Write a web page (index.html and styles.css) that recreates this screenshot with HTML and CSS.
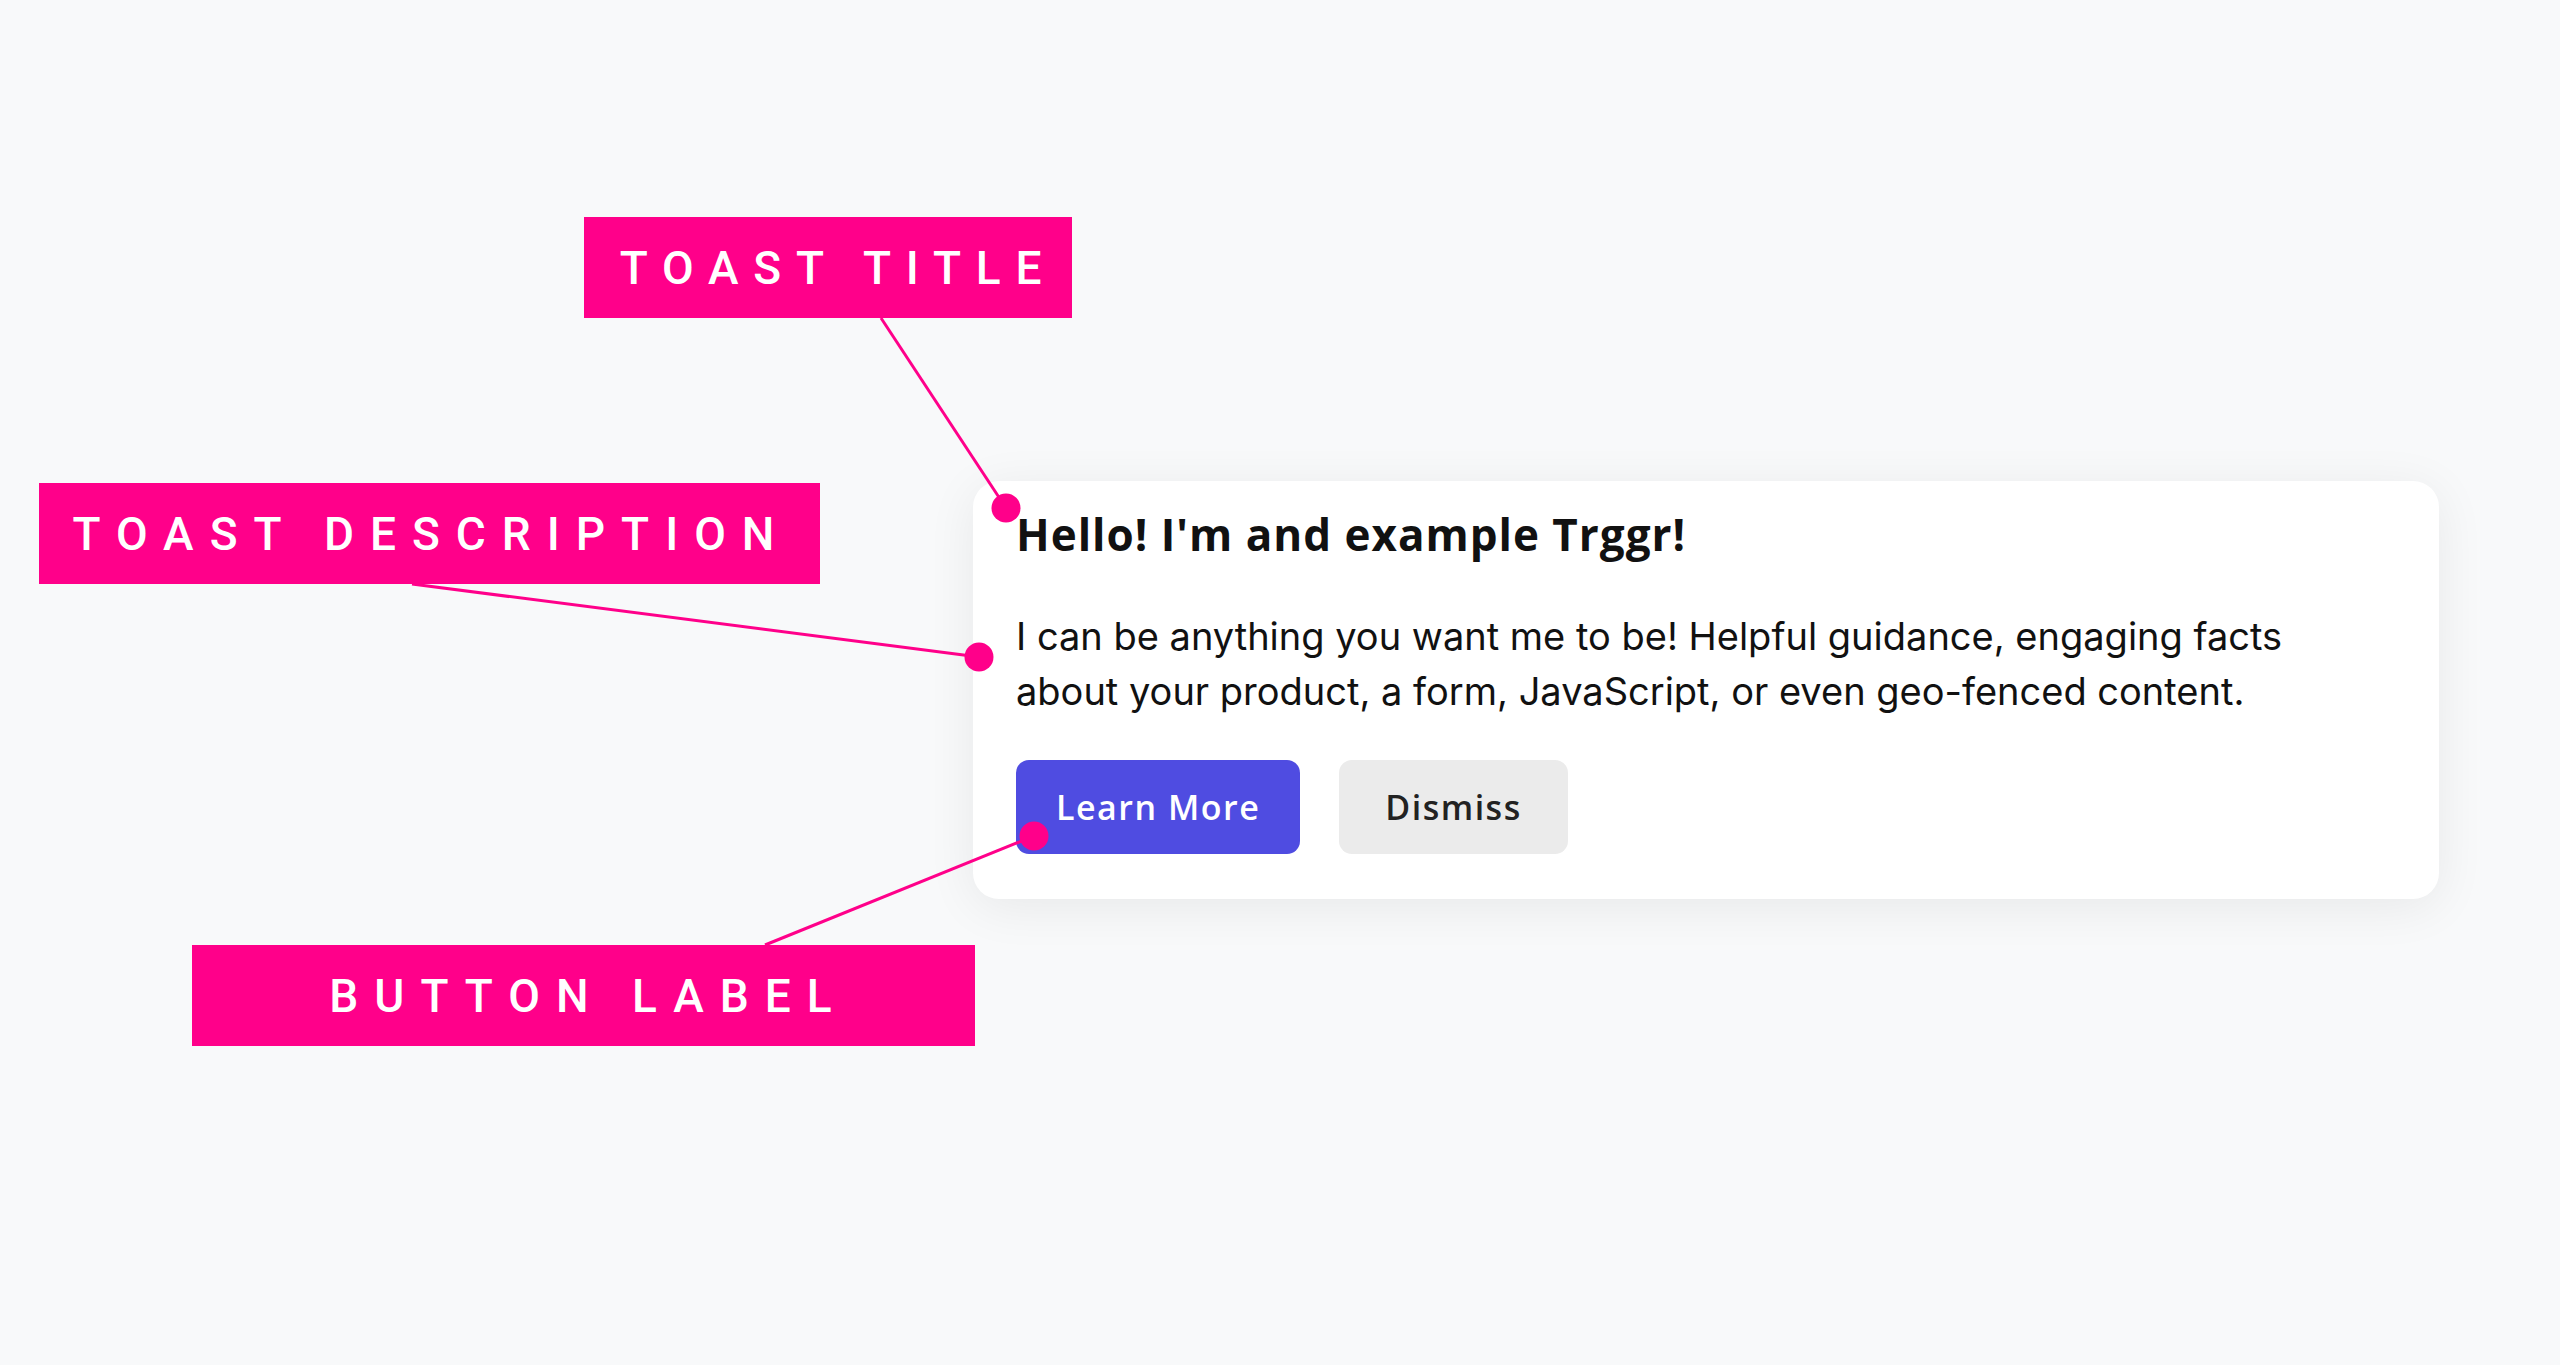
FILE: index.html
```html
<!DOCTYPE html>
<html>
<head>
<meta charset="utf-8">
<title>Toast anatomy</title>
<link rel="stylesheet" href="styles.css">
</head>
<body>
<div id="canvas">

  <div class="toast">
    <h2 class="toast-title">Hello! I'm and example Trggr!</h2>
    <p class="toast-desc">I can be anything you want me to be! Helpful guidance, engaging facts about your product, a form, JavaScript, or even geo-fenced content.</p>
    <div class="toast-actions">
      <button type="button" class="btn btn-primary">Learn More</button>
      <button type="button" class="btn btn-plain">Dismiss</button>
    </div>
  </div>

  <!-- annotations -->
  <div class="tag tag-title">TOAST TITLE</div>
  <div class="tag tag-desc">TOAST DESCRIPTION</div>
  <div class="tag tag-button">BUTTON LABEL</div>

  <svg class="leaders" width="2560" height="1365" viewBox="0 0 2560 1365">
    <g stroke="#ff008a" stroke-width="3" fill="none">
      <line x1="881" y1="318" x2="1006" y2="508"/>
      <line x1="412" y1="584" x2="979" y2="657"/>
      <line x1="765" y1="945" x2="1034" y2="836"/>
    </g>
    <g fill="#ff008a">
      <circle cx="1006" cy="508" r="14.5"/>
      <circle cx="979" cy="657" r="14.5"/>
      <circle cx="1034" cy="836" r="14.5"/>
    </g>
  </svg>

</div>
</body>
</html>
```

FILE: styles.css
```css
body {margin: 0; background: #f8f9fa; font-family: Inter, "Liberation Sans", Arial, sans-serif;}
#canvas {position: relative; width: 2560px; height: 1365px; padding-top: 481px; box-sizing: border-box; overflow: hidden;}

.toast {margin-left: 973px; width: 1466px; height: 418px; box-sizing: border-box; padding: 27px 46px 0 43px; background: #fff; border-radius: 26px; box-shadow: 0 8px 50px rgba(0, 0, 0, 0.07);}
.toast-title {margin: 0; font-family: "Open Sans", Lato, sans-serif; font-weight: 700; font-size: 44px; line-height: 1.2; letter-spacing: 1px; color: #111;}
.toast-desc {margin: 48px 0 0 0; font-size: 38px; line-height: 55px; color: #111; width: 1300px;}
.toast-actions {display: flex; gap: 39px; margin-top: 41px;}

.btn {height: 94px; padding: 0 40px; border: 0; border-radius: 13px; font-family: "Open Sans", Lato, sans-serif; font-weight: 600; font-size: 34px; letter-spacing: 1.5px; cursor: pointer;}
.btn-primary {background: #4f4ce1; color: #fff;}
.btn-plain {padding: 0 46px; background: #ebebeb; color: #222;}

.tag {position: absolute; height: 101px; display: flex; align-items: center; justify-content: center; box-sizing: border-box; padding-left: 10px; background: #ff008a; color: #fff; font-family: Roboto, "Liberation Sans", sans-serif; font-weight: 500; font-size: 46px; letter-spacing: 16px;}
.tag-title {left: 584px; top: 217px; width: 488px; padding-left: 20px; letter-spacing: 14.8px;}
.tag-desc {left: 39px; top: 483px; width: 781px; padding-left: 4px;}
.tag-button {left: 192px; top: 945px; width: 783px;}

.leaders {position: absolute; left: 0; top: 0; pointer-events: none;}
```
